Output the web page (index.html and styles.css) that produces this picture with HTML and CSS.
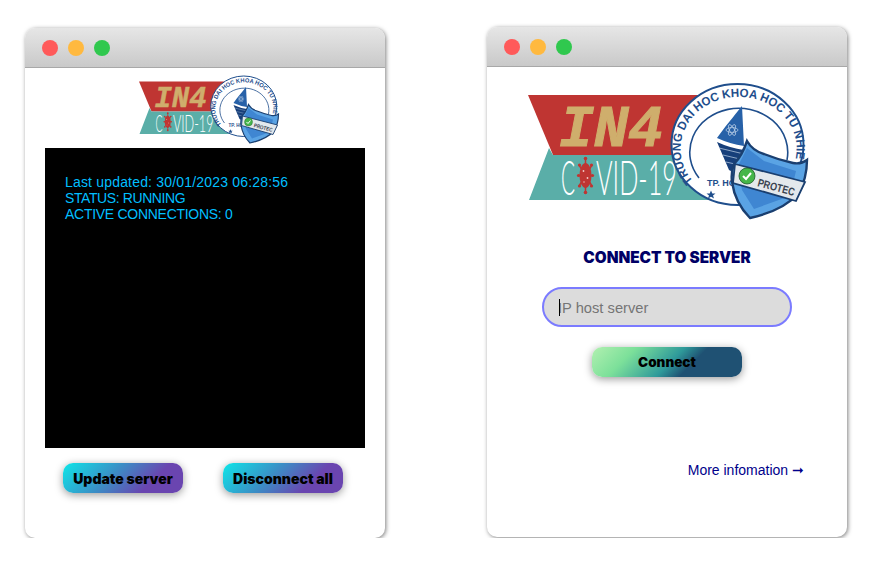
FILE: index.html

```html
<!DOCTYPE html>
<html lang="en">
<head>
    <meta charset="UTF-8">
    <meta name="viewport" content="width=device-width, initial-scale=1.0">
    <title>IN4 Covid-19 Server</title>
    <link rel="stylesheet" href="styles.css">
</head>
<body>
    <svg class="sprite" width="0" height="0">
        <symbol id="logo" viewBox="0 0 300 150">
            <polygon points="10,17 182,17 182,77 35,77" fill="#bf3532"/>
            <polygon points="31,70 35,77 170,77 195,122 11,122" fill="#5aaea8"/>
            <text x="41" y="68" class="logo-in4" textLength="104" lengthAdjust="spacingAndGlyphs">IN4</text>
            <text x="43" y="117" class="logo-covid" textLength="14" lengthAdjust="spacingAndGlyphs">C</text>
            <text x="78" y="117" class="logo-covid" textLength="81" lengthAdjust="spacingAndGlyphs">VID-19</text>
            <!-- virus -->
            <g stroke="#bf3532" stroke-width="1.500">
                <line x1="67.500" y1="81" x2="67.500" y2="114"/>
                <line x1="61" y1="87" x2="74" y2="108"/>
                <line x1="61" y1="108" x2="74" y2="87"/>
                <line x1="60.500" y1="97.500" x2="74.500" y2="97.500"/>
            </g>
            <ellipse cx="67.500" cy="97.500" rx="6" ry="12.500" fill="#bf3532"/>
            <g fill="#bf3532">
                <circle cx="67.500" cy="80.500" r="1.800"/><circle cx="67.500" cy="114.500" r="1.800"/>
                <circle cx="61.500" cy="87" r="1.600"/><circle cx="73.500" cy="87" r="1.600"/>
                <circle cx="61.500" cy="108" r="1.600"/><circle cx="73.500" cy="108" r="1.600"/>
                <circle cx="60.500" cy="97.500" r="1.600"/><circle cx="74.500" cy="97.500" r="1.600"/>
            </g>
            <circle cx="65.500" cy="93" r=".9" fill="#f3c9c6"/>
            <circle cx="69.500" cy="100" r=".9" fill="#f3c9c6"/>
            <circle cx="66" cy="104" r=".7" fill="#f3c9c6"/>
            <!-- school seal -->
            <ellipse cx="219.500" cy="66.500" rx="66" ry="60.500" fill="#fff" stroke="#1f4e8c" stroke-width="2"/>
            <path d="M 181 100 A 49 44 0 1 1 269 82" fill="none" stroke="#1f4e8c" stroke-width="1.600"/>
            <path id="seal-arc" d="M 175 103 A 58 52 0 1 1 277 83" fill="none"/>
            <text class="logo-seal"><textPath href="#seal-arc" textLength="226" lengthAdjust="spacingAndGlyphs">TRUONG DAI HOC KHOA HOC TU NHIEN</textPath></text>
            <text x="189" y="108" class="logo-tp">TP. HCM</text>
            <polygon points="193,112.500 194.300,115.500 197.500,115.500 195,117.500 196,120.500 193,118.800 190,120.500 191,117.500 188.500,115.500 191.700,115.500" fill="#1f4e8c"/>
            <path d="M224 28 C216 38 206 50 199 60 Q212 66 226 68 Z" fill="#2761a8"/>
            <path d="M199 64 Q212 70 226 72 L226 100 L211 92 Z" fill="#173f7a"/>
            <g fill="none" stroke="#c3d5ea" stroke-width=".7">
                <ellipse cx="214" cy="52" rx="6" ry="2.400"/>
                <ellipse cx="214" cy="52" rx="6" ry="2.400" transform="rotate(60 214 52)"/>
                <ellipse cx="214" cy="52" rx="6" ry="2.400" transform="rotate(120 214 52)"/>
                <path d="M201 70 L226 76 M205 77 L226 82 M208 84 L226 88"/>
            </g>
            <!-- shield -->
            <path d="M229 63 C233 70 239 74 246 76 C256 80 266 83 275 85 C280 86 285 85 289 82 C289 95 286 106 280 116 C269 128 250 136 232 140 C222 130 216 118 214 104 C213 96 214 91 216 86 C222 80 226 72 229 63 Z" fill="#5aa3e4" stroke="#1a3f70" stroke-width="2.400"/>
            <polygon points="229,70 246,83 278,93 272,118 236,131 224,112 220,88" fill="#3f86d2"/>
            <polygon points="217,86 287,104 278,123 215,105" fill="#e3e8ec" stroke="#1a3f70" stroke-width="1.800"/>
            <circle cx="229" cy="98" r="8" fill="#45b649" stroke="#1f5d2b" stroke-width=".8"/>
            <path d="M225 98 L228 101 L233 95" fill="none" stroke="#fff" stroke-width="2"/>
            <text x="239" y="108" class="logo-protec" transform="rotate(15 239 108)" textLength="38" lengthAdjust="spacingAndGlyphs">PROTEC</text>
        </symbol>
    </svg>

    <div class="window">
        <div class="titlebar">
            <span class="dot red"></span>
            <span class="dot yellow"></span>
            <span class="dot green"></span>
        </div>
        <svg class="logo logo-small"><use href="#logo"/></svg>
        <div class="terminal">
            <div class="line-updated">Last updated: 30/01/2023 06:28:56</div>
            <div class="line-status">STATUS: RUNNING</div>
            <div class="line-active">ACTIVE CONNECTIONS: 0</div>
        </div>
        <div class="actions">
            <button class="btn btn-purple">Update server</button>
            <button class="btn btn-purple">Disconnect all</button>
        </div>
    </div>

    <div class="window window-right">
        <div class="titlebar">
            <span class="dot red"></span>
            <span class="dot yellow"></span>
            <span class="dot green"></span>
        </div>
        <svg class="logo logo-large"><use href="#logo"/></svg>
        <div class="connect">
            <h2>CONNECT TO SERVER</h2>
            <div class="host-wrap">
                <input class="host" type="text" placeholder="IP host server">
                <span class="caret"></span>
            </div>
            <button class="btn btn-green">Connect</button>
            <a class="more" href="#">More infomation &#10142;</a>
        </div>
    </div>
</body>
</html>
```

FILE: styles.css

```css
body {
    margin: 0;
    padding: 28px 0 0 25px;
    display: flex;
    align-items: flex-start;
    gap: 102px;
    background: #fff;
    font-family: "Liberation Sans", Arial, sans-serif;
}

.sprite {
    position: absolute;
}

.window {
    width: 360px;
    height: 510px;
    border-radius: 10px;
    background: #fff;
    box-shadow: 1px 1px 4px rgba(0, 0, 0, 0.5);
    overflow: hidden;
    flex: none;
}

.window-right {
    margin-top: -1px;
}

.titlebar {
    height: 39px;
    display: flex;
    align-items: center;
    gap: 10px;
    padding-left: 17px;
    background: linear-gradient(#e6e6e6, #c9c9c9);
    border-bottom: 1px solid #a8a8a8;
}

.dot {
    width: 16px;
    height: 16px;
    border-radius: 50%;
}
.red { background: #ff5a5a; }
.yellow { background: #ffb93f; }
.green { background: #30c84e; }

.logo {
    display: block;
}
.logo-small {
    width: 150px;
    height: 75px;
    margin: 5px 0 0 109px;
}
.logo-large {
    width: 300px;
    height: 150px;
    margin: 11px 0 0 31px;
}

.logo-in4 {
    font: italic bold 60px "Liberation Mono", monospace;
    fill: #cfae6c;
    stroke: #cfae6c;
    stroke-width: 1px;
}
.logo-covid {
    font: 300 48px Lato, "Liberation Sans", sans-serif;
    fill: #fff;
}
.logo-seal {
    font: bold 12px "Liberation Sans", sans-serif;
    fill: #1f4e8c;
}
.logo-tp {
    font: bold 9px "Liberation Sans", sans-serif;
    fill: #1f4e8c;
}
.logo-protec {
    font: bold 11px "Liberation Sans", sans-serif;
    fill: #3a4350;
}

.terminal {
    width: 320px;
    height: 300px;
    margin-left: 20px;
    padding: 26px 20px;
    box-sizing: border-box;
    background: #000;
    color: #00bfff;
    font-size: 14px;
    line-height: 16px;
}
.line-updated {
    letter-spacing: 0.18px;
}
.line-status {
    letter-spacing: -0.4px;
}
.line-active {
    letter-spacing: -0.28px;
}

.actions {
    display: flex;
    gap: 40px;
    margin: 15px 0 0 38px;
}

.btn {
    border: none;
    border-radius: 10px;
    height: 30px;
    padding: 0;
    color: #000;
    font: 900 14px Inter, Roboto, sans-serif;
    box-shadow: 0 2px 8px rgba(0, 0, 0, 0.4);
}
.btn-purple {
    width: 120px;
    background: linear-gradient(135deg, #0ee6e8 0%, #3a8fc6 40%, #6a45b0 72%);
}
.btn-green {
    width: 150px;
    margin-top: 20px;
    font-size: 13.5px;
    background: linear-gradient(135deg, #b2f0b0 0%, #7ce09a 25%, #2f9a9a 52%, #1f5173 65%);
}

.connect {
    display: flex;
    flex-direction: column;
    align-items: center;
}

.connect h2 {
    margin: 21px 0 0;
    color: #000066;
    font: 900 15.3px/18px Inter, Roboto, sans-serif;
}

.host-wrap {
    position: relative;
    margin-top: 20px;
}

.host {
    display: block;
    width: 250px;
    height: 40px;
    box-sizing: border-box;
    padding: 1px 14px 0;
    border: 2px solid #7b7bff;
    border-radius: 20px;
    outline: none;
    background: #dcdcdc;
    font: 14.7px "Liberation Sans", sans-serif;
}

.caret {
    position: absolute;
    left: 17px;
    top: 12px;
    width: 1px;
    height: 17px;
    background: #000;
}

.more {
    align-self: flex-end;
    margin: 85px 43px 0 0;
    color: #00008b;
    font-size: 14px;
    line-height: 16px;
    text-decoration: none;
}
```
